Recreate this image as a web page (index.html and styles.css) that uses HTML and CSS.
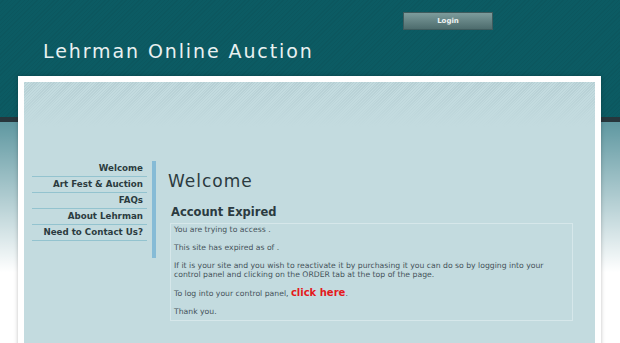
FILE: index.html
```html
<!DOCTYPE html>
<html>
	<head>
		<meta charset="utf-8" />
		<title>Lehrman Online Auction</title>
		<link rel="stylesheet" href="styles.css">
	</head>
	<body>
		<div class="header">
			<div class="login-row">
				<a class="login" href="#">Login</a>
			</div>
			<div class="site-title">Lehrman Online Auction</div>
		</div>

		<div class="frame">
			<div class="inner">
				<div class="nav">
					<a class="nav-item" href="#">Welcome</a>
					<a class="nav-item" href="#">Art Fest &amp; Auction</a>
					<a class="nav-item" href="#">FAQs</a>
					<a class="nav-item" href="#">About Lehrman</a>
					<a class="nav-item" href="#">Need to Contact Us?</a>
				</div>

				<div class="main">
					<h1>Welcome</h1>
					<h2>Account Expired</h2>
					<div class="notice">
						<p>You are trying to access .</p>
						<p>This site has expired as of .</p>
						<p>If it is your site and you wish to reactivate it by purchasing it you can do so by logging into your control panel and clicking on the ORDER tab at the top of the page.</p>
						<p>To log into your control panel, <a class="click" href="#">click here</a>.</p>
						<p>Thank you.</p>
					</div>
				</div>
			</div>
		</div>
	</body>
</html>
```

FILE: styles.css
```css
html{
	overflow: hidden;
}

body{
	margin: 0;
	font-family: "DejaVu Sans", Verdana, sans-serif;
	background:
		linear-gradient(to bottom, rgba(255,255,255,0) 0, #ffffff 150px) 0 122px / 100% 100% no-repeat,
		repeating-linear-gradient(135deg, rgba(0,0,0,0) 0, rgba(0,0,0,0) 2px, rgba(0,0,0,0.04) 2px, rgba(0,0,0,0.04) 3px) 0 0 / 100% 117px no-repeat,
		linear-gradient(to bottom, #0c5b63 0, #0c5b63 117px, #27363c 117px, #27363c 122px, #5f98a1 122px) 0 0 / 100% 122px no-repeat,
		#5f98a1;
	min-height: 343px;
}

/* header */
.header{
	width: 583px;
	margin-left: 18px;
	padding-top: 12px;
}

.login-row{
	display: flex;
	justify-content: flex-end;
	padding-right: 108px;
}

.login{
	display: block;
	width: 88px;
	height: 16px;
	line-height: 16px;
	text-align: center;
	border: 1px solid #3e5b5d;
	background: linear-gradient(to bottom, #7d9c9c, #4d6c6d);
	color: #eef3f3;
	font-size: 7px;
	font-weight: bold;
	text-decoration: none;
}

.site-title{
	margin-top: 10px;
	padding-left: 25px;
	height: 22px;
	line-height: 22px;
	font-size: 19px;
	letter-spacing: 1.9px;
	color: #e9f1f1;
}

/* content frame */
.frame{
	width: 583px;
	margin: 14px 0 0 18px;
	border: 6px solid #ffffff;
	border-bottom: none;
	box-sizing: border-box;
	box-shadow: 0 0 4px rgba(0,0,0,0.25);
}

.inner{
	display: flex;
	height: 300px;
	padding-top: 79px;
	box-sizing: border-box;
	background:
		linear-gradient(to bottom, rgba(195,219,223,0) 0, #c3dbdf 45px),
		repeating-linear-gradient(135deg, #c3dbdf 0, #c3dbdf 1px, #b6cfd4 1px, #b6cfd4 2px);
}

.nav{
	display: flex;
	flex-direction: column;
	align-self: flex-start;
	width: 115px;
	margin-left: 8px;
	padding-right: 5px;
	padding-bottom: 17px;
	border-right: 4px solid #86bbd6;
}

.nav-item{
	display: block;
	height: 15px;
	line-height: 15px;
	padding-right: 4px;
	text-align: right;
	border-bottom: 1px solid #93c3cf;
	color: #2c3b40;
	font-size: 8.7px;
	font-weight: bold;
	text-decoration: none;
}

.main{
	padding-left: 12px;
}

h1{
	margin: 10px 0 0;
	height: 20px;
	line-height: 20px;
	font-size: 17px;
	font-weight: normal;
	letter-spacing: 1px;
	color: #2b3a40;
}

h2{
	margin: 14px 0 4px 3px;
	line-height: 14px;
	font-size: 11.5px;
	color: #2b3a40;
}

.notice{
	width: 403px;
	margin-left: 2px;
	padding: 1px 20px 4px 3px;
	box-sizing: border-box;
	border: 1px solid #d6e7ea;
	color: #45535a;
	font-size: 7.7px;
}

.notice p{
	margin: 0 0 9px;
	line-height: 9px;
}

.notice p:last-child{
	margin-bottom: 0;
}

.click{
	color: #e4191c;
	font-size: 10px;
	font-weight: bold;
	text-decoration: none;
}
```
